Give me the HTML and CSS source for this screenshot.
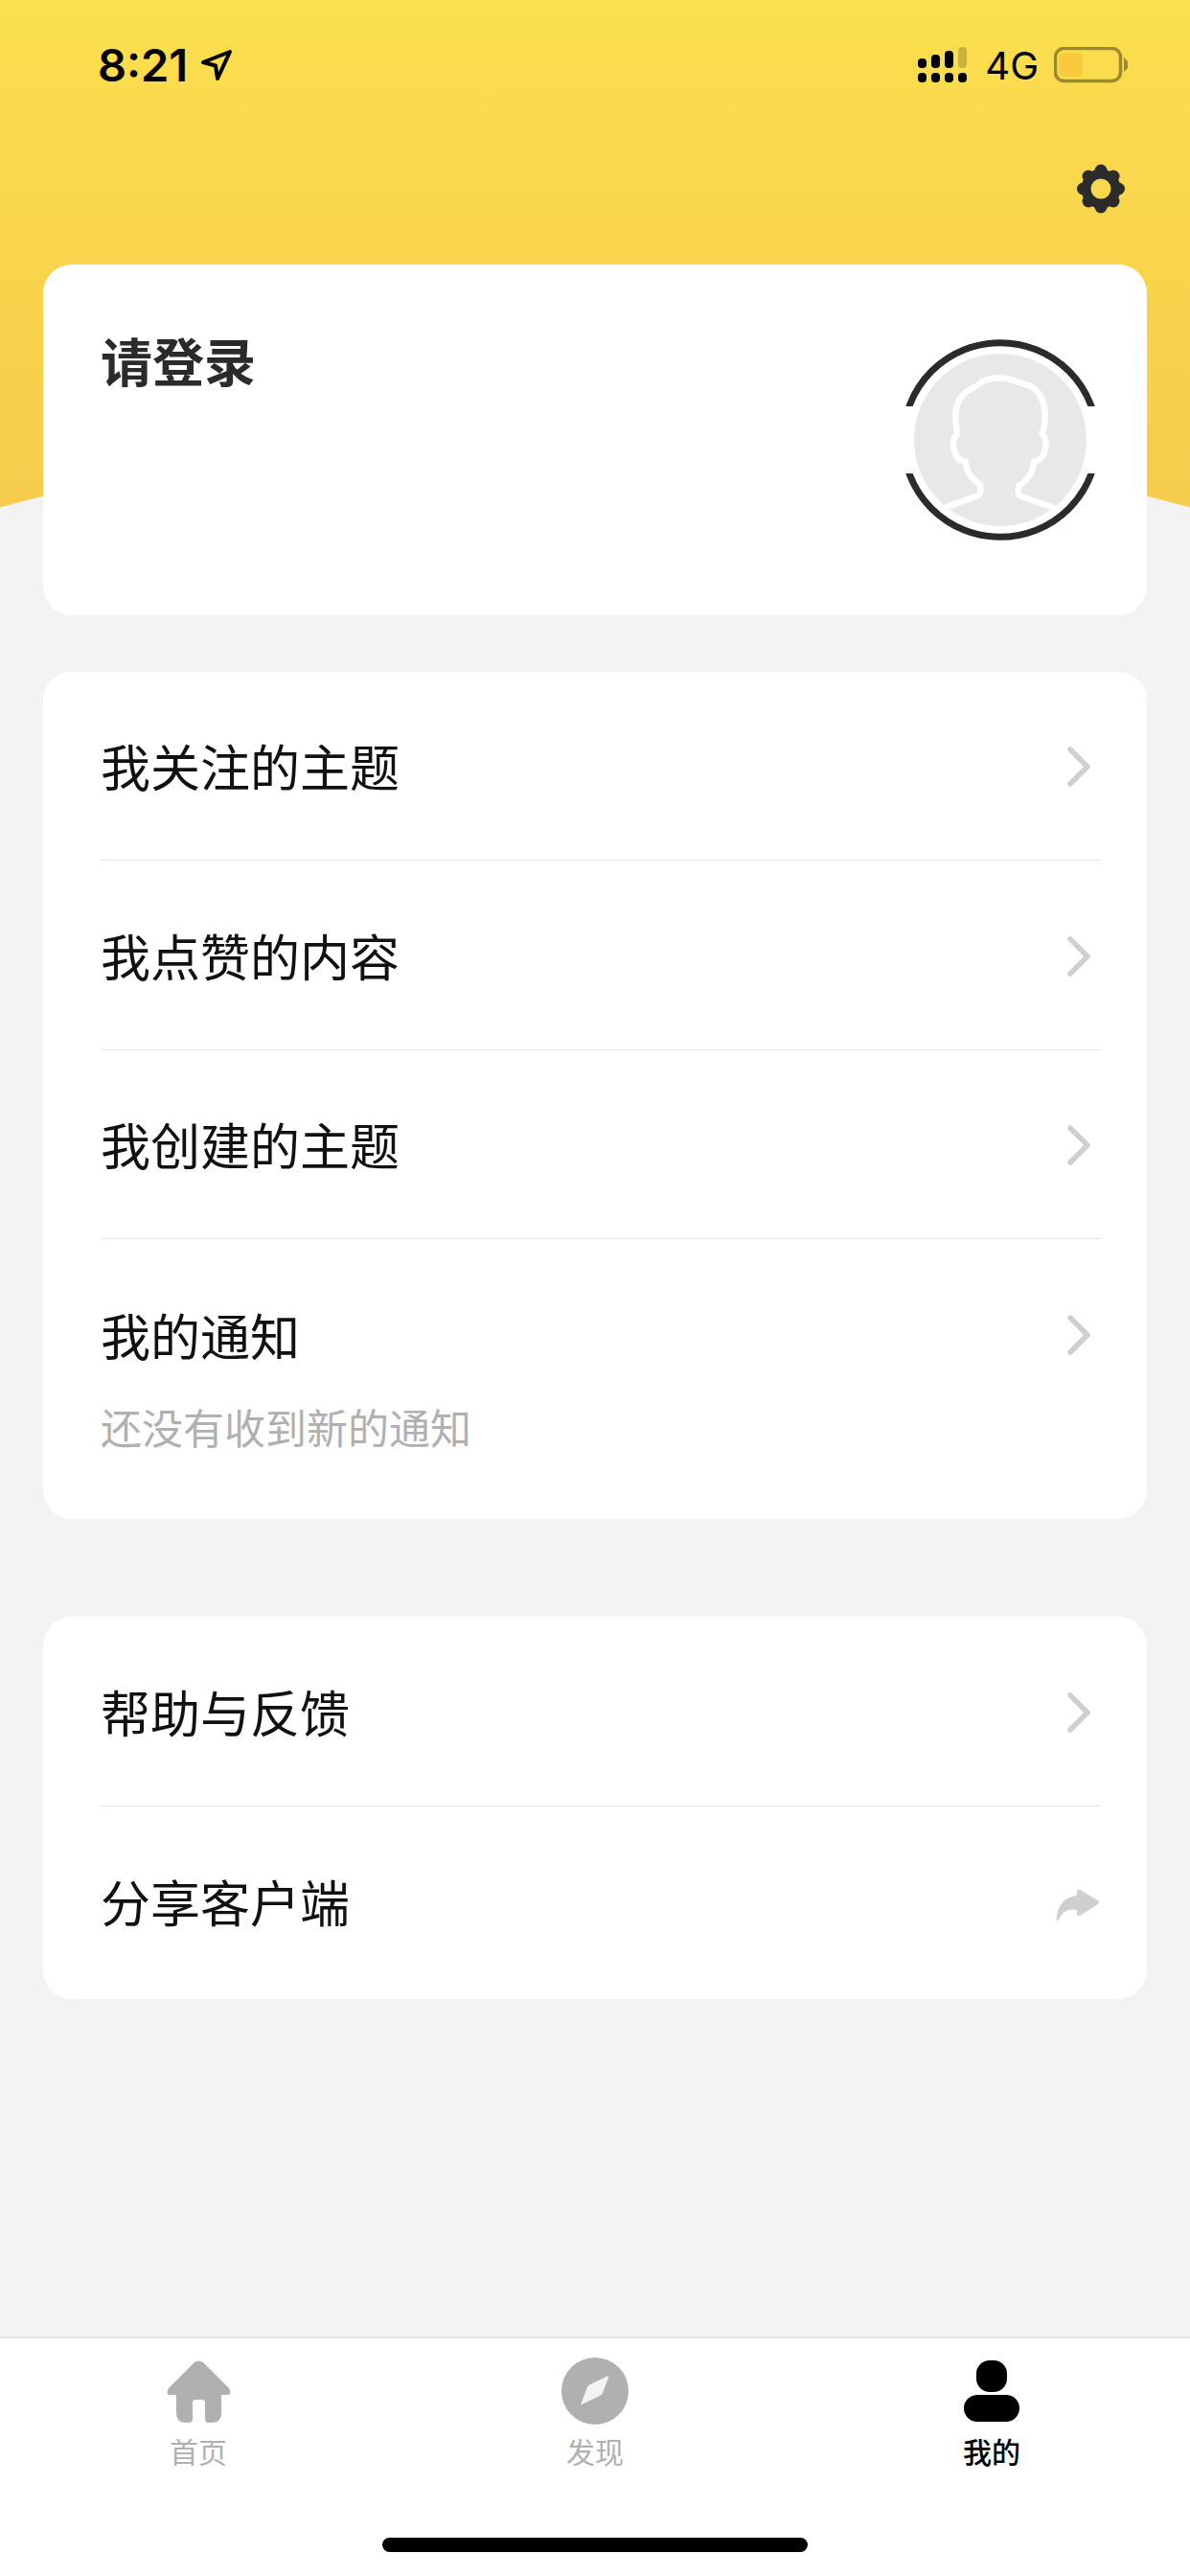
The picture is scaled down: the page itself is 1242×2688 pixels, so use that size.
FILE: index.html
```html
<!DOCTYPE html>
<html lang="zh-CN">
<head>
    <meta charset="UTF-8">
    <meta name="viewport" content="width=device-width, initial-scale=1.0">
    <title>我的</title>
    <link rel="stylesheet" href="styles.css">
</head>
<body>
    <svg class="defs" width="0" height="0">
        <symbol id="chevron" viewBox="0 0 30 48">
            <path d="M6 6 L24 24 L6 42" fill="none" stroke="#cfcfcf" stroke-width="5.5" stroke-linecap="round" stroke-linejoin="round"/>
        </symbol>
    </svg>

    <div class="page">
        <div class="hero"></div>

        <div class="status">
            <div class="status-left">
                <span class="time">8:21</span>
                <svg class="loc" width="34" height="34" viewBox="0 0 34 34">
                    <path d="M31 3 L3 14 L16 17.5 L18 31 Z" fill="none" stroke="#000" stroke-width="4" stroke-linejoin="round"/>
                </svg>
            </div>
            <div class="status-right">
                <svg width="52" height="38" viewBox="0 0 52 38">
                    <rect x="0" y="12" width="9" height="10" rx="4" fill="#000"/>
                    <rect x="14" y="8" width="9" height="14" rx="4" fill="#000"/>
                    <rect x="28" y="4" width="9" height="18" rx="4" fill="#000"/>
                    <rect x="42" y="0" width="9" height="22" rx="4" fill="#c9b23d"/>
                    <rect x="0" y="27" width="9" height="10" rx="4" fill="#000"/>
                    <rect x="14" y="27" width="9" height="10" rx="4" fill="#000"/>
                    <rect x="28" y="27" width="9" height="10" rx="4" fill="#000"/>
                    <rect x="42" y="27" width="9" height="10" rx="4" fill="#000"/>
                </svg>
                <span class="net">4G</span>
                <svg width="78" height="38" viewBox="0 0 78 38">
                    <rect x="1.5" y="1.5" width="68" height="34" rx="9" fill="none" stroke="#9c8a32" stroke-width="3.5"/>
                    <rect x="5" y="6" width="25" height="25" rx="5" fill="#f8ca3c"/>
                    <path d="M73 11 L77 15 V22 L73 26 Z" fill="#9c8a32"/>
                </svg>
            </div>
        </div>

        <div class="settings">
            <svg width="50" height="52" viewBox="0 0 50 52">
                <g fill="#2b2b2b">
                    <circle cx="25" cy="7" r="6.500"/>
                    <circle cx="25" cy="45" r="6.500"/>
                    <circle cx="6.500" cy="26" r="6.500"/>
                    <circle cx="43.500" cy="26" r="6.500"/>
                    <circle cx="12" cy="13" r="6.500"/>
                    <circle cx="38" cy="13" r="6.500"/>
                    <circle cx="12" cy="39" r="6.500"/>
                    <circle cx="38" cy="39" r="6.500"/>
                </g>
                <circle cx="25" cy="26" r="15.500" fill="none" stroke="#2b2b2b" stroke-width="10"/>
            </svg>
        </div>

        <main class="main">
            <section class="card login">
                <h1 class="login-title">请登录</h1>
                <svg class="avatar" width="240" height="240" viewBox="132 57 720 720">
                    <circle cx="492" cy="417" r="304" fill="none" stroke="#2b2b2b" stroke-width="21"/>
                    <rect x="132" y="312" width="720" height="210" fill="#fff"/>
                    <circle cx="492" cy="417" r="270" fill="#e8e8e8"/>
                    <path class="avatar-line" d="M322 628 L425 590 Q432 585 430 570 V557 Q385 530 383 485 Q345 480 345 425 Q345 410 358 398 Q350 370 352 330 Q358 280 400 258 Q420 248 440 232 Q490 212 545 235 Q570 243 590 250 Q630 275 632 340 Q632 375 622 398 Q637 410 635 430 Q632 480 597 485 Q597 530 550 560 Q545 580 553 592 L660 630"/>
                </svg>
            </section>

            <section class="card list">
                <div class="row">
                    <span class="row-title">我关注的主题</span>
                    <svg class="arrow" width="30" height="48"><use href="#chevron"/></svg>
                </div>
                <div class="row row-tall">
                    <span class="row-title">我点赞的内容</span>
                    <svg class="arrow" width="30" height="48"><use href="#chevron"/></svg>
                </div>
                <div class="row">
                    <span class="row-title">我创建的主题</span>
                    <svg class="arrow" width="30" height="48"><use href="#chevron"/></svg>
                </div>
                <div class="row row-notice">
                    <div class="row-line">
                        <span class="row-title">我的通知</span>
                        <svg class="arrow-plain" width="30" height="48"><use href="#chevron"/></svg>
                    </div>
                    <p class="row-sub">还没有收到新的通知</p>
                </div>
            </section>

            <section class="card list list-more">
                <div class="row row-tall">
                    <span class="row-title">帮助与反馈</span>
                    <svg class="arrow" width="30" height="48"><use href="#chevron"/></svg>
                </div>
                <div class="row row-tall">
                    <span class="row-title">分享客户端</span>
                    <svg class="share" width="46" height="34" viewBox="0 0 46 34">
                        <path d="M1 32 C1 15 12 8 22 7 V3 Q22 0 25 1 L44 12 Q46 14 44 16 L25 28 Q22 29 22 26 V22 C14 20 6 24 3 32 Q1 35 1 32 Z" fill="#cfcfcf"/>
                    </svg>
                </div>
            </section>
        </main>

        <nav class="tabbar">
            <div class="tabs">
                <a class="tab" href="#">
                    <span class="tab-icon">
                        <svg width="67" height="65" viewBox="0 0 67 65">
                            <path d="M29 2 Q33.500 -1 38 2 L65 29 Q69 36 62 36 H57 V55 Q57 65 47 65 H44 Q40 65 40 61 V44 Q40 41 37 41 H30 Q27 41 27 44 V61 Q27 65 23 65 H20 Q10 65 10 55 V36 H5 Q-2 36 2 29 Z" fill="#b0b0b0"/>
                        </svg>
                    </span>
                    <span class="tab-label">首页</span>
                </a>
                <a class="tab" href="#">
                    <span class="tab-icon">
                        <svg width="70" height="70" viewBox="0 0 70 70">
                            <circle cx="35" cy="35" r="35" fill="#b0b0b0"/>
                            <path d="M49 21 L43 37 Q42 39 40 40 L21 49 Q20 50 20.500 48 L27 31 Q28 29 30 28 L48 19.500 Q50 19 49 21 Z" fill="#f3f3f3"/>
                        </svg>
                    </span>
                    <span class="tab-label">发现</span>
                </a>
                <a class="tab tab-on" href="#">
                    <span class="tab-icon">
                        <svg width="58" height="64" viewBox="0 0 58 64">
                            <rect x="13" y="0" width="32" height="33" rx="14" fill="#000"/>
                            <rect x="0" y="36" width="58" height="28" rx="14" fill="#000"/>
                        </svg>
                    </span>
                    <span class="tab-label">我的</span>
                </a>
            </div>
            <div class="home-bar"></div>
        </nav>
    </div>
</body>
</html>
```

FILE: styles.css
```css
* {
    box-sizing: border-box;
}
html, body {
    margin: 0;
    padding: 0;
}
body {
    font-family: "Noto Sans CJK SC", "Noto Sans", sans-serif;
    background-color: #f3f3f3;
}
.defs {
    position: absolute;
}
.page {
    position: relative;
    width: 1242px;
    height: 2688px;
    display: flex;
    flex-direction: column;
    overflow: hidden;
}

/* yellow top, the grey hill cuts into it */
.hero {
    position: absolute;
    top: 0;
    left: 0;
    width: 1242px;
    height: 540px;
    overflow: hidden;
    background: linear-gradient(180deg, #fbdf4e 0%, #f6cb4c 100%);
}
.hero::after {
    content: "";
    position: absolute;
    top: 447px;
    left: -1759px;
    width: 4760px;
    height: 4760px;
    border-radius: 50%;
    background-color: #f3f3f3;
}

.status {
    position: relative;
    height: 136px;
    padding: 0 65px 0 102px;
    display: flex;
    align-items: center;
    justify-content: space-between;
}
.status-left, .status-right {
    display: flex;
    align-items: center;
}
.status-right {
    transform: translateX(1px);
}
.time {
    font-family: Inter, "Liberation Sans", sans-serif;
    font-size: 47px;
    font-weight: 600;
    line-height: 56px;
    color: #000;
}
.loc {
    margin-left: 13px;
}
.net {
    margin: 1px 16px 0 18px;
    font-family: Inter, "Liberation Sans", sans-serif;
    font-size: 40px;
    font-weight: 400;
    line-height: 44px;
    color: #000;
}

.settings {
    position: relative;
    height: 140px;
    padding: 35px 68px 0 0;
    display: flex;
    justify-content: flex-end;
    align-items: flex-start;
}

.main {
    position: relative;
    flex: 1;
    padding: 0 45px;
}
.card {
    background-color: #fff;
    border-radius: 30px;
}
.login {
    height: 366px;
    padding: 63px 33px 0 60px;
    display: flex;
    justify-content: space-between;
    align-items: flex-start;
}
.login-title {
    margin: -3px 0 0;
    font-size: 54px;
    font-weight: 700;
    line-height: 80px;
    color: #2b2b2b;
}
.avatar-line {
    fill: none;
    stroke: #fff;
    stroke-width: 19;
    stroke-linecap: round;
    stroke-linejoin: round;
}

.list {
    margin-top: 59px;
    padding: 0 48px 0 60px;
}
.list-more {
    margin-top: 102px;
    padding-bottom: 3px;
}
.row {
    height: 197px;
    padding-right: 8px;
    display: flex;
    align-items: center;
    justify-content: space-between;
    border-bottom: 1px solid #e5e5e5;
}
.row-tall {
    height: 198px;
}
.row:last-child {
    border-bottom: none;
}
.row-title {
    font-size: 52px;
    line-height: 70px;
    color: #111;
}
.row-notice {
    height: 292px;
    padding: 65px 8px 0 0;
    display: block;
}
.row-line {
    display: flex;
    align-items: center;
    justify-content: space-between;
}
.row-sub {
    margin: 30px 0 0;
    font-size: 43px;
    line-height: 60px;
    color: #b0b0b3;
}
.arrow {
    display: block;
    margin-top: 2px;
}
.arrow-plain {
    display: block;
}
.share {
    display: block;
    margin: 8px -7px 0 0;
}

.tabbar {
    position: relative;
    height: 250px;
    background-color: #fff;
    border-top: 2px solid #e2e2e2;
}
.tabs {
    display: grid;
    grid-template-columns: repeat(3, 414px);
    padding-top: 20px;
}
.tab {
    display: flex;
    flex-direction: column;
    align-items: center;
    text-decoration: none;
    color: #b0b0b0;
}
.tab-on {
    color: #000;
}
.tab-on .tab-label {
    font-weight: 500;
}
.tab-icon {
    height: 70px;
    display: flex;
    align-items: center;
    justify-content: center;
}
.tab-label {
    margin-top: 7px;
    font-size: 30px;
    line-height: 40px;
}
.home-bar {
    width: 444px;
    height: 15px;
    margin: 71px auto 0;
    border-radius: 8px;
    background-color: #000;
}
```
